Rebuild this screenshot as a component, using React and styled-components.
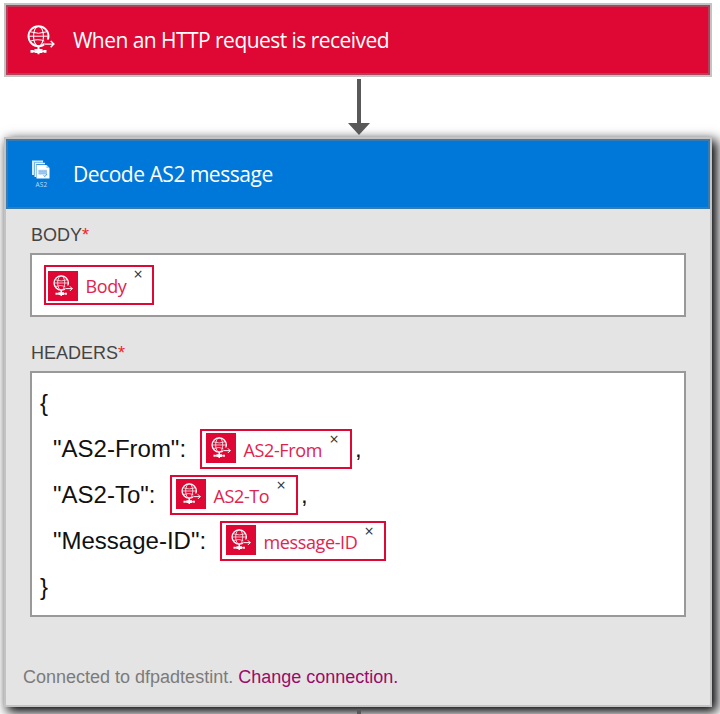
import React from "react";
import styled, { createGlobalStyle } from "styled-components";

const GlobalStyle = createGlobalStyle`
  *, *::before, *::after { box-sizing: border-box; }
  html, body { margin: 0; height: 714px; overflow: hidden; background: #fff; }
  body { font-family: "Liberation Sans", Arial, sans-serif; }
`;

const Designer = styled.main`
  display: flex;
  flex-direction: column;
  width: 720px;
  height: 714px;
  padding: 3px 8px 0 4px;
  overflow: hidden;
`;

const Card = styled.section`
  flex: none;
  display: flex;
  flex-direction: column;
  height: ${(p) => p.$height}px;
  border: 2px solid #c3c3c3;
  background: #e4e4e4;
  box-shadow: ${(p) => (p.$raised ? "4px 4px 11px 1px #000004" : "none")};
`;

const CardHeader = styled.header`
  flex: none;
  display: flex;
  align-items: center;
  height: 70px;
  border: 2px solid ${(p) => p.$edge};
  background: ${(p) => p.$fill};
`;

const HeaderIcon = styled.span`
  display: flex;
  justify-content: center;
  width: 65px;
  flex: none;
`;

const Title = styled.h2`
  margin: 0;
  color: #fff;
  font: 400 21px/30px "Open Sans", sans-serif;
  letter-spacing: ${(p) => p.$tracking}px;
  white-space: nowrap;
`;

const Connector = styled.div`
  flex: none;
  display: flex;
  justify-content: center;
  height: ${(p) => p.$height}px;
  padding: 2px 0 0 1px;
  position: relative;
  z-index: 1;
  svg { display: block; }
`;

const CardBody = styled.div`
  display: flex;
  flex-direction: column;
  padding: 15px 24px 0;
`;

const Label = styled.div`
  height: 29px;
  font-size: 18px;
  line-height: 22px;
  color: #444;
  padding-left: 1px;
`;

const Required = styled.span`
  color: #f21d1d;
`;

const Field = styled.div`
  height: ${(p) => p.$height}px;
  border: 2px solid #999;
  background: #fff;
  padding: ${(p) => p.$padding};
  margin-bottom: ${(p) => p.$gap}px;
`;

const Line = styled.div`
  display: flex;
  height: 46px;
  color: #111;
  font-size: 24px;
  line-height: 46px;
  white-space: pre;
`;

const Brace = styled.span`
  line-height: 45px;
`;

const Key = styled.span`
  width: ${(p) => p.$width}px;
  padding-left: 13px;
  flex: none;
`;

const Comma = styled.span`
  padding-left: 3px;
`;

const Token = styled.span`
  flex: none;
  display: flex;
  width: ${(p) => p.$width}px;
  height: 40px;
  margin-top: ${(p) => (p.$lone ? 0 : 3)}px;
  padding: ${(p) => (p.$lone ? "4px 0 0 2px" : "2px 0 0 4px")};
  border: 2px solid #df0733;
  background: #fff;
`;

const TokenIcon = styled.span`
  flex: none;
  display: flex;
  width: 30px;
  height: 30px;
  padding: 4px 0 0 5px;
  background: #df0733;
`;

const TokenName = styled.span`
  width: ${(p) => p.$width}px;
  padding: ${(p) => (p.$lone ? 1 : 3)}px 0 0 7.5px;
  color: #df2450;
  font: 400 18px/28px "Open Sans", sans-serif;
  letter-spacing: -0.38px;
  white-space: nowrap;
`;

const Remove = styled.span`
  color: #333;
  font: 400 16px/14px "Open Sans", sans-serif;
  margin-top: ${(p) => (p.$lone ? -4 : -1)}px;
`;

const Footer = styled.footer`
  padding: 0 0 0 17px;
  font-size: 18px;
  line-height: 22px;
  color: #7b7b7b;
  white-space: nowrap;
`;

const ChangeLink = styled.a`
  color: #9b0a69;
`;

function GlobeIcon({ size }) {
  return (
    <svg width={size} height={size * 30 / 28} viewBox="0 0 28 30" fill="none" stroke="#fff">
      <circle cx="11.5" cy="11.2" r="10" strokeWidth="1.9" />
      <ellipse cx="11.5" cy="11.2" rx="5" ry="10" strokeWidth="1.1" />
      <path d="M3.2 6.8q8.3 3 16.6 0M1.5 11.2h20M3.2 16.2q8.3-3 14.3 0" strokeWidth="1" />
      <path d="M17.5 14.6h10.5v9h-10.5z" fill="#df0733" stroke="none" />
      <path d="M18 19.1h9M23.7 15.9l3.2 3.2-3.2 3.2" strokeWidth="1.4" />
      <path d="M10.5 20.5h2v3.5h3v1.6h1v-.6h3v2.7h-3v-.8h-1v1h-3v1.4h-2v-1.4h-3v-1h-1v.8h-3v-2.7h3v.6h1V24h3z" fill="#fff" stroke="none" />
    </svg>
  );
}

function As2Icon() {
  return (
    <svg width="20" height="29" viewBox="0 0 20 29">
      <path d="M1 .5h11v2H3V15H1z" fill="#d5e9fa" />
      <path d="M3.5 2.8h10.5v1.4H5.2V17H3.5z" fill="#e6f2fc" />
      <path d="M5.5 5h10l3 3v10.5h-13z" fill="#fff" />
      <path d="M15.5 5v3h3z" fill="#9ccaf2" />
      <path d="M7.5 9.8h8.5v4.8H7.5z" fill="#a9d0f4" />
      <path d="M7.5 11.2h8.5M7.5 13.2h8.5" stroke="#7db8ec" strokeWidth=".8" />
      <path d="M12.5 15.5l1.5 1 2-2.5" stroke="#4b9ce4" fill="none" />
      <text x="4.6" y="27.2" fill="#b9dcf8" fontSize="6.5" fontFamily="Open Sans, sans-serif" textLength="11.5">AS2</text>
    </svg>
  );
}

function DynamicToken({ name, width, textWidth, lone }) {
  return (
    <Token $width={width} $lone={lone}>
      <TokenIcon><GlobeIcon size={20} /></TokenIcon>
      <TokenName $width={textWidth} $lone={lone}>{name}</TokenName>
      <Remove $lone={lone}>×</Remove>
    </Token>
  );
}

export default function App() {
  return (
    <>
      <GlobalStyle />
      <Designer>
        <Card $height={74}>
          <CardHeader $fill="#df0733" $edge="#b24059">
            <HeaderIcon><GlobeIcon size={28} /></HeaderIcon>
            <Title $tracking={-0.54}>When an HTTP request is received</Title>
          </CardHeader>
        </Card>
        <Connector $height={60}>
          <svg width="22" height="56" viewBox="0 0 22 56">
            <path d="M9 0h4v44h9L11 56 0 44h9z" fill="#595959" />
          </svg>
        </Connector>
        <Card $height={570} $raised>
          <CardHeader $fill="#0078d9" $edge="#397bb0">
            <HeaderIcon><As2Icon /></HeaderIcon>
            <Title $tracking={-0.47}>Decode AS2 message</Title>
          </CardHeader>
          <CardBody>
            <Label>BODY<Required>*</Required></Label>
            <Field $height={64} $padding="10px 12px" $gap={25}>
              <DynamicToken name="Body" width={110} textWidth={55.5} lone />
            </Field>
            <Label>HEADERS<Required>*</Required></Label>
            <Field $height={246} $padding="7px 8px" $gap={49}>
              <Line><Brace>{"{"}</Brace></Line>
              <Line>
                <Key $width={160}>"AS2-From":</Key>
                <DynamicToken name="AS2-From" width={152} textWidth={93.5} />
                <Comma>,</Comma>
              </Line>
              <Line>
                <Key $width={130}>"AS2-To":</Key>
                <DynamicToken name="AS2-To" width={128} textWidth={70.5} />
                <Comma>,</Comma>
              </Line>
              <Line>
                <Key $width={180}>"Message-ID":</Key>
                <DynamicToken name="message-ID" width={166} textWidth={108.5} />
              </Line>
              <Line><Brace>{"}"}</Brace></Line>
            </Field>
          </CardBody>
          <Footer>Connected to dfpadtestint. <ChangeLink>Change connection.</ChangeLink></Footer>
        </Card>
        <Connector $height={7}>
          <svg width="22" height="5"><path d="M9 0h4v5H9z" fill="#595959" /></svg>
        </Connector>
      </Designer>
    </>
  );
}
